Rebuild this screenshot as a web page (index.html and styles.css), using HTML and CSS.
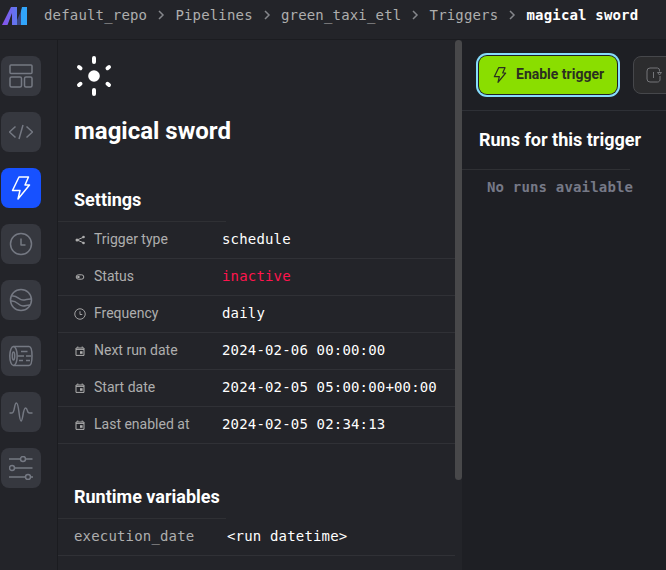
FILE: index.html
```html
<!DOCTYPE html>
<html lang="en">
<head>
<meta charset="utf-8">
<title>magical sword</title>
<link rel="stylesheet" href="styles.css">
</head>
<body>
<svg class="defs" aria-hidden="true">
  <symbol id="chev" viewBox="0 0 8 10"><path d="M2 1l4 4-4 4"/></symbol>
  <symbol id="cal" viewBox="0 0 10 10"><path d="M1 2h8v7.4H1zM1 3.4h8M2.8.5v1.4M7.2.5v1.4"/><path class="solid" d="M5 5.2h2.6v2.6H5z"/></symbol>
  <symbol id="clock" viewBox="0 0 24 24"><circle cx="12" cy="12" r="10.5"/><path d="M12 6.5V13h4.5"/></symbol>
</svg>
<header class="header">
  <svg class="logo" width="26" height="20" viewBox="0 0 26 20">
    <defs><linearGradient id="lg" x1="0" x2="1"><stop offset="0" stop-color="#8a50ec"/><stop offset="1" stop-color="#5d7af0"/></linearGradient></defs>
    <path fill="#3a4580" d="M15 14l5-11v16h-5z"/>
    <path fill="url(#lg)" d="M0 19L9 1h6v18h-5V7L5.500 19z"/>
    <path fill="#31a5fb" d="M20 1h5v18h-6V5z"/>
  </svg>
  <nav class="crumbs">
    <span>default_repo</span><svg class="chev"><use href="#chev"/></svg>
    <span>Pipelines</span><svg class="chev"><use href="#chev"/></svg>
    <span>green_taxi_etl</span><svg class="chev"><use href="#chev"/></svg>
    <span>Triggers</span><svg class="chev"><use href="#chev"/></svg>
    <b>magical sword</b>
  </nav>
</header>
<div class="body">
  <aside class="sidebar">
    <a class="nav"><svg viewBox="0 0 24 24"><rect x="1" y="1" width="22" height="8.5" rx="1"/><rect x="1" y="13" width="11.5" height="10" rx="1.5"/><rect x="15.5" y="13" width="7.5" height="10" rx="1.5"/></svg></a>
    <a class="nav"><svg viewBox="0 0 24 24"><path d="M6.500 6.500L.500 12l6 5.500M17.500 6.500l6 5.500-6 5.500M14 5l-4 14"/></svg></a>
    <a class="nav active"><svg viewBox="0 0 24 24"><path d="M10 1h9.500l-3.500 8h4.500L9 23l2-8.500H3.500z"/></svg></a>
    <a class="nav"><svg viewBox="0 0 24 24"><use href="#clock"/></svg></a>
    <a class="nav"><svg viewBox="0 0 24 24"><circle cx="12" cy="12" r="10.500"/><path d="M3 8c5-1 7 4 11 4 3 0 5-1.500 8.500-1M2 13c6-1 7 5 12 5 3 0 4-1 7-1"/></svg></a>
    <a class="nav"><svg viewBox="0 0 24 24"><path d="M4.500 2.500h15.500c4 0 4 19 0 19H4.500"/><ellipse cx="4.500" cy="12" rx="3.700" ry="9.500"/><ellipse cx="4.500" cy="12" rx="1.200" ry="4"/><path d="M12 7.500h6.500M9 12h6M17 12h5M10 16.500h4M17 16.500h4"/></svg></a>
    <a class="nav"><svg viewBox="0 0 24 24"><path d="M.5 13H3c3 0 2-10 4.500-10S10 21 12 21s2-13 4.500-13 1 5 4 5h3"/></svg></a>
    <a class="nav"><svg viewBox="0 0 24 24"><path d="M0 3h11.500M17 3h6.500M6 12h17.500M0 21h17M22 21h2"/><circle cx="14" cy="3" r="2.500"/><circle cx="3" cy="12" r="2.500"/><circle cx="19" cy="21" r="2.500"/></svg></a>
  </aside>
  <main class="details">
    <svg class="sun" width="40" height="40" viewBox="0 0 40 40"><circle cx="20" cy="20" r="5.800"/><path d="M20 2v4M20 34v4M5 11l1.500 1.200M35 11l-1.500 1.200M5 29l1.500-1.200M35 29l-1.500-1.200"/></svg>
    <h1>magical sword</h1>
    <h2>Settings</h2>
    <div class="rule"></div>
    <dl class="rows">
      <div class="row"><svg viewBox="0 0 10 10"><path d="M9 2L2 5l7 3"/><circle class="solid" cx="8.500" cy="2" r="1.300"/><circle class="solid" cx="2" cy="5" r="1.500"/><circle class="solid" cx="8.500" cy="8" r="1.300"/></svg><dt>Trigger type</dt><dd>schedule</dd></div>
      <div class="row"><svg viewBox="0 0 10 10"><rect x="1.200" y="2.800" width="7.600" height="4.400" rx="2.200"/><circle class="solid" cx="3.400" cy="5" r="1.300"/></svg><dt>Status</dt><dd class="bad">inactive</dd></div>
      <div class="row"><svg class="big" viewBox="0 0 24 24"><use href="#clock"/></svg><dt>Frequency</dt><dd>daily</dd></div>
      <div class="row"><svg><use href="#cal"/></svg><dt>Next run date</dt><dd>2024-02-06 00:00:00</dd></div>
      <div class="row"><svg><use href="#cal"/></svg><dt>Start date</dt><dd>2024-02-05 05:00:00+00:00</dd></div>
      <div class="row"><svg><use href="#cal"/></svg><dt>Last enabled at</dt><dd>2024-02-05 02:34:13</dd></div>
    </dl>
    <h2 class="second">Runtime variables</h2>
    <div class="rule"></div>
    <dl class="rows">
      <div class="row vars"><dt>execution_date</dt><dd>&lt;run datetime&gt;</dd></div>
    </dl>
  </main>
  <div class="track"><div class="thumb"></div></div>
  <section class="runs">
    <div class="toolbar">
      <button class="enable"><svg viewBox="0 0 24 24"><path d="M10 1h9.500l-3.500 8h4.500L9 23l2-8.500H3.500z"/></svg>Enable trigger</button>
      <button class="once"><svg width="16" height="16" viewBox="0 0 16 16"><path d="M13.500 4.500V4A2.500 2.500 0 0 0 11.500 1H4a3 3 0 0 0-3 3v8a3 3 0 0 0 3 3h7.500A2.500 2.500 0 0 0 14 12V9M11.500 5.500h4L13.500 8zM7.500 5v6"/></svg></button>
    </div>
    <h2>Runs for this trigger</h2>
    <div class="rule"></div>
    <p>No runs available</p>
  </section>
</div>
</body>
</html>
```
FILE: styles.css
```css
* { box-sizing: border-box; }
body {
  margin: 0;
  width: 666px;
  height: 570px;
  overflow: hidden;
  display: flex;
  flex-direction: column;
  background: #232429;
  color: #fff;
  font: 14px/20px Roboto, sans-serif;
}
.defs { display: none; }
svg { fill: none; stroke: currentColor; flex: none; }
.solid { fill: currentColor; stroke: none; }
.header {
  height: 40px;
  flex: none;
  display: flex;
  align-items: flex-start;
  gap: 16px;
  padding: 6px 0 0 2px;
  border-bottom: 1px solid #1b1c20;
}
.logo { stroke: none; }
.crumbs, dd, .vars dt, .runs p {
  font-family: "DejaVu Sans Mono", monospace;
  font-size: 14px;
  letter-spacing: 0.170px;
}
.crumbs {
  display: flex;
  align-items: center;
  margin-top: -1px;
  color: #aeaeae;
  white-space: nowrap;
}
.crumbs b { color: #fff; }
.chev { width: 8px; height: 10px; margin: 0 10.100px; stroke-width: 1.5; color: #85868b; }
.body { flex: 1; display: flex; min-height: 0; }
.sidebar {
  width: 58px;
  padding: 16px 0 0 1px;
  border-right: 1px solid #1b1c20;
  display: flex;
  flex-direction: column;
  gap: 16px;
}
.nav {
  width: 40px;
  height: 40px;
  flex: none;
  display: grid;
  place-items: center;
  border-radius: 8px;
  background: #36383f;
  color: #757983;
}
.nav svg { width: 24px; height: 24px; stroke-width: 1.500; stroke-linejoin: round; }
.active { background: #1751ff; color: #fff; }
.details { width: 397px; }
.sun { display: block; margin: 16px 0 0 16px; stroke: #fff; stroke-width: 4; stroke-linecap: round; }
.sun circle { fill: #fff; stroke: none; }
h1, h2, dl, dd, p { margin: 0; }
h1 { font-size: 24px; line-height: 32px; margin: 19px 0 0 16px; }
h2 { font-size: 18px; line-height: 26px; margin: 40px 0 8px 16px; }
.rule { width: 168px; height: 1px; background: #2f3034; }
.row {
  height: 37px;
  display: flex;
  align-items: center;
  border-bottom: 1px solid #303136;
  padding: 0 0 2px 16px;
  color: #aeaeae;
}
.row svg { width: 10px; height: 10px; margin: 2px 9px 0 1px; }
.row svg.big { width: 12px; height: 12px; margin: 2px 8px 0 0; stroke-width: 1.800; }
dt { width: 128px; }
dd { color: #fff; }
.bad { color: #ff144d; }
.vars dt { width: 153px; }
h2.second { margin-top: 40px; }
.track { width: 7px; }
.thumb { height: 440px; border-radius: 4px; background: #48484a; }
.runs { flex: 1; background: #1e1f24; min-width: 0; overflow: hidden; }
.toolbar {
  height: 71px;
  display: flex;
  gap: 16px;
  padding: 16px 0 0 17px;
  border-bottom: 1px solid #2e3036;
}
button {
  flex: none;
  height: 38px;
  display: flex;
  align-items: center;
  border-radius: 8px;
  font: bold 14px/20px Roboto, sans-serif;
}
.enable {
  width: 138px;
  padding: 0 0 2px 13px;
  border: 0;
  background: #8ade00;
  color: #2b3020;
  box-shadow: 0 0 0 1px #1e1f24, 0 0 0 3px #86ddfb;
}
.enable svg { width: 16px; height: 16px; margin: 2px 8px 0 0; stroke-width: 1.800; stroke-linejoin: round; }
.once { width: 130px; padding: 0 12px; border: 1px solid #46474b; background: #2c2c2e; color: #747579; }
.runs h2 { margin: 16px 0 16px 17px; }
.runs p { padding: 7px 0 0 25px; color: #767987; font-weight: bold; }
```
